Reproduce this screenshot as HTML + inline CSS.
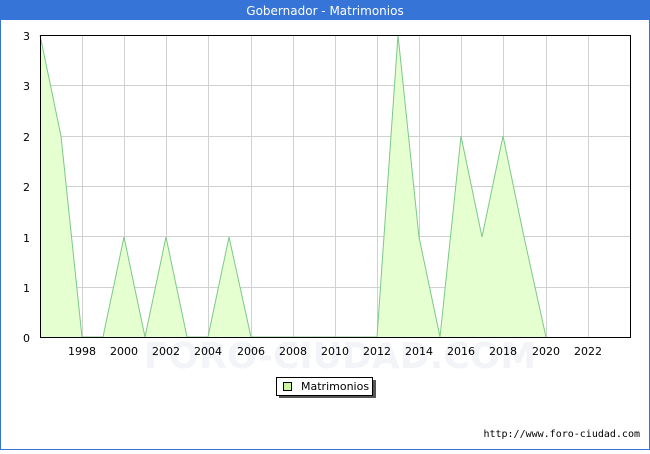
<!DOCTYPE html>
<html><head><style>
body{margin:0;width:650px;height:450px;overflow:hidden;background:#fff;font-family:"DejaVu Sans","Liberation Sans",sans-serif;}
</style></head><body>
<svg width="650" height="450" xmlns="http://www.w3.org/2000/svg" font-family="DejaVu Sans, Liberation Sans, sans-serif">
<rect x="0.5" y="0.5" width="649" height="449" fill="#fff" stroke="#3674d8"/>
<rect x="0" y="0" width="650" height="20" fill="#3674d8"/>
<text x="325" y="15" text-anchor="middle" font-size="12" fill="#fff">Gobernador - Matrimonios</text>
<g stroke="#d0d0d0" stroke-width="1">
<line x1="82.5" y1="35" x2="82.5" y2="337"/><line x1="124.5" y1="35" x2="124.5" y2="337"/>
<line x1="166.5" y1="35" x2="166.5" y2="337"/><line x1="208.5" y1="35" x2="208.5" y2="337"/>
<line x1="251.5" y1="35" x2="251.5" y2="337"/><line x1="293.5" y1="35" x2="293.5" y2="337"/>
<line x1="335.5" y1="35" x2="335.5" y2="337"/><line x1="377.5" y1="35" x2="377.5" y2="337"/>
<line x1="419.5" y1="35" x2="419.5" y2="337"/><line x1="461.5" y1="35" x2="461.5" y2="337"/>
<line x1="503.5" y1="35" x2="503.5" y2="337"/><line x1="546.5" y1="35" x2="546.5" y2="337"/>
<line x1="588.5" y1="35" x2="588.5" y2="337"/>
<line x1="40" y1="85.5" x2="630" y2="85.5"/><line x1="40" y1="136.5" x2="630" y2="136.5"/>
<line x1="40" y1="186.5" x2="630" y2="186.5"/><line x1="40" y1="236.5" x2="630" y2="236.5"/>
<line x1="40" y1="287.5" x2="630" y2="287.5"/>
</g>
<text x="340" y="368" text-anchor="middle" font-size="36" fill="#f2f4f8" font-weight="bold">FORO-CIUDAD.COM</text>
<polygon fill="#e6ffd0" points="40,337 40,35 61,136 82,337 103,337 124,237 145,337 166,237 187,337 208,337 229,237 251,337 377,337 398,35 419,237 440,337 461,136 482,237 503,136 524,237 546,337 630,337"/>
<polyline fill="none" stroke="#7cc88a" stroke-width="1" points="40,35 61,136 82,337 103,337 124,237 145,337 166,237 187,337 208,337 229,237 251,337 377,337 398,35 419,237 440,337 461,136 482,237 503,136 524,237 546,337"/>
<rect x="40.5" y="35.5" width="590" height="302" fill="none" stroke="#000"/>
<g font-size="11" fill="#000">
<text x="30" y="40" text-anchor="end">3</text><text x="30" y="90" text-anchor="end">3</text>
<text x="30" y="141" text-anchor="end">2</text><text x="30" y="191" text-anchor="end">2</text>
<text x="30" y="242" text-anchor="end">1</text><text x="30" y="292" text-anchor="end">1</text>
<text x="30" y="342" text-anchor="end">0</text>
<g text-anchor="middle">
<text x="82" y="355">1998</text><text x="124" y="355">2000</text><text x="166" y="355">2002</text>
<text x="208" y="355">2004</text><text x="251" y="355">2006</text><text x="293" y="355">2008</text>
<text x="335" y="355">2010</text><text x="377" y="355">2012</text><text x="419" y="355">2014</text>
<text x="461" y="355">2016</text><text x="503" y="355">2018</text><text x="546" y="355">2020</text>
<text x="588" y="355">2022</text></g>
</g>
<rect x="279" y="380" width="97" height="18" fill="#555"/>
<rect x="276.5" y="377.5" width="96" height="18" fill="#fff" stroke="#000"/>
<rect x="283.5" y="382.5" width="8" height="8" fill="#ccf5a0" stroke="#000"/>
<text x="301" y="390" font-size="11">Matrimonios</text>
<text x="640" y="437" text-anchor="end" font-size="10" font-family="DejaVu Sans Mono, Liberation Mono, monospace">http://www.foro-ciudad.com</text>
</svg>
</body></html>
